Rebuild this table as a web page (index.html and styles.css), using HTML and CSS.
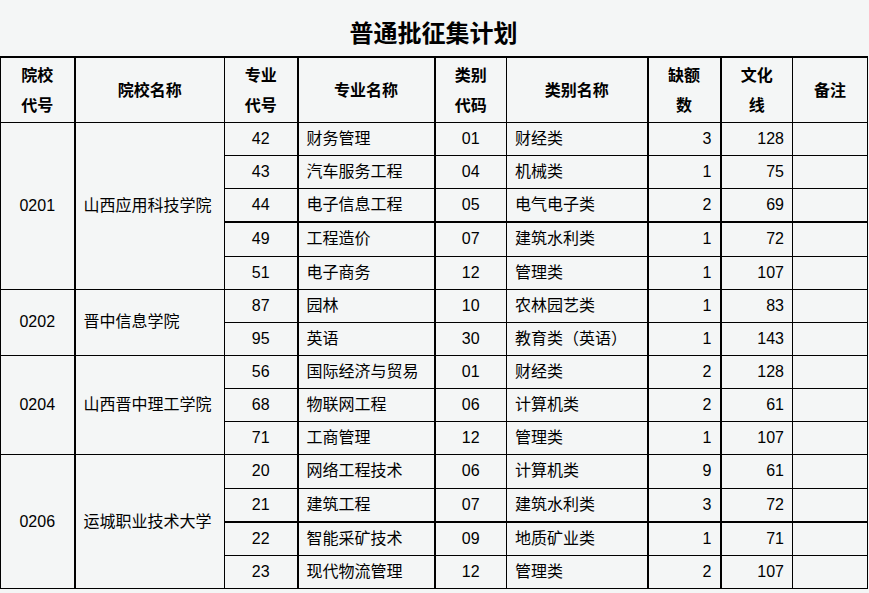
FILE: index.html
```html
<!DOCTYPE html>
<html lang="zh-CN">
<head>
<meta charset="utf-8">
<title>普通批征集计划</title>
<link rel="stylesheet" href="styles.css">
</head>
<body>
<div class="page">
  <h1 class="title">普通批征集计划</h1>
  <table class="plan">
    <colgroup>
      <col class="w1"><col class="w2"><col class="w3"><col class="w4"><col class="w5"><col class="w6"><col class="w7"><col class="w8"><col class="w9">
    </colgroup>
    <thead>
      <tr>
        <th class="tr">院校<br>代号</th>
        <th>院校名称</th>
        <th class="tr">专业<br>代号</th>
        <th class="tr">专业名称</th>
        <th>类别<br>代码</th>
        <th class="tr">类别名称</th>
        <th class="tr">缺额<br>数</th>
        <th>文化<br>线</th>
        <th>备注</th>
      </tr>
    </thead>
    <tbody>
      <tr>
        <td class="ctr tr" rowspan="5">0201</td>
        <td class="lft" rowspan="5">山西应用科技学院</td>
        <td class="ctr tr">42</td><td class="lft tr">财务管理</td><td class="ctr">01</td><td class="lft tr">财经类</td><td class="rgt tr">3</td><td class="rgt">128</td><td></td>
      </tr>
      <tr><td class="ctr tr">43</td><td class="lft tr">汽车服务工程</td><td class="ctr">04</td><td class="lft tr">机械类</td><td class="rgt tr">1</td><td class="rgt">75</td><td></td></tr>
      <tr><td class="ctr tr">44</td><td class="lft tr">电子信息工程</td><td class="ctr">05</td><td class="lft tr">电气电子类</td><td class="rgt tr">2</td><td class="rgt">69</td><td></td></tr>
      <tr class="tt"><td class="ctr tr">49</td><td class="lft tr">工程造价</td><td class="ctr">07</td><td class="lft tr">建筑水利类</td><td class="rgt tr">1</td><td class="rgt">72</td><td></td></tr>
      <tr><td class="ctr tr">51</td><td class="lft tr">电子商务</td><td class="ctr">12</td><td class="lft tr">管理类</td><td class="rgt tr">1</td><td class="rgt">107</td><td></td></tr>

      <tr>
        <td class="ctr tr" rowspan="2">0202</td>
        <td class="lft" rowspan="2">晋中信息学院</td>
        <td class="ctr tr">87</td><td class="lft tr">园林</td><td class="ctr">10</td><td class="lft tr">农林园艺类</td><td class="rgt tr">1</td><td class="rgt">83</td><td></td>
      </tr>
      <tr><td class="ctr tr">95</td><td class="lft tr">英语</td><td class="ctr">30</td><td class="lft tr">教育类（英语）</td><td class="rgt tr">1</td><td class="rgt">143</td><td></td></tr>

      <tr>
        <td class="ctr tr" rowspan="3">0204</td>
        <td class="lft" rowspan="3">山西晋中理工学院</td>
        <td class="ctr tr">56</td><td class="lft tr">国际经济与贸易</td><td class="ctr">01</td><td class="lft tr">财经类</td><td class="rgt tr">2</td><td class="rgt">128</td><td></td>
      </tr>
      <tr><td class="ctr tr">68</td><td class="lft tr">物联网工程</td><td class="ctr">06</td><td class="lft tr">计算机类</td><td class="rgt tr">2</td><td class="rgt">61</td><td></td></tr>
      <tr><td class="ctr tr">71</td><td class="lft tr">工商管理</td><td class="ctr">12</td><td class="lft tr">管理类</td><td class="rgt tr">1</td><td class="rgt">107</td><td></td></tr>

      <tr>
        <td class="ctr tr" rowspan="4">0206</td>
        <td class="lft" rowspan="4">运城职业技术大学</td>
        <td class="ctr tr">20</td><td class="lft tr">网络工程技术</td><td class="ctr">06</td><td class="lft tr">计算机类</td><td class="rgt tr">9</td><td class="rgt">61</td><td></td>
      </tr>
      <tr><td class="ctr tr">21</td><td class="lft tr">建筑工程</td><td class="ctr">07</td><td class="lft tr">建筑水利类</td><td class="rgt tr">3</td><td class="rgt">72</td><td></td></tr>
      <tr class="tt"><td class="ctr tr">22</td><td class="lft tr">智能采矿技术</td><td class="ctr">09</td><td class="lft tr">地质矿业类</td><td class="rgt tr">1</td><td class="rgt">71</td><td></td></tr>
      <tr><td class="ctr tr">23</td><td class="lft tr">现代物流管理</td><td class="ctr">12</td><td class="lft tr">管理类</td><td class="rgt tr">2</td><td class="rgt">107</td><td></td></tr>
    </tbody>
  </table>
</div>
</body>
</html>
```
FILE: styles.css
```css
html, body {
  margin: 0;
  padding: 0;
  background: #f4f6f6;
}
.page {
  width: 867px;
  font-family: "Liberation Sans", "Noto Sans CJK SC", sans-serif;
  color: #000;
}
.title {
  margin: 0;
  height: 56px;
  display: flex;
  align-items: center;
  justify-content: center;
  font-family: "Noto Sans CJK SC", sans-serif;
  font-size: 24px;
  font-weight: 700;
  padding-top: 6px;
  box-sizing: border-box;
}
.plan {
  width: 867px;
  border-collapse: collapse;
  table-layout: fixed;
  font-size: 16px;
  border-top: 2px solid #000;
}
.w1 { width: 74px; }
.w2 { width: 150px; }
.w3 { width: 73px; }
.w4 { width: 137px; }
.w5 { width: 72px; }
.w6 { width: 141px; }
.w7 { width: 73px; }
.w8 { width: 72px; }
.w9 { width: 75px; }
.plan th, .plan td {
  border: 1px solid #000;
  padding: 0;
}
.plan th {
  height: 61px;
  font-family: "Noto Sans CJK SC", sans-serif;
  font-size: 16px;
  font-weight: 700;
  line-height: 30px;
  text-align: center;
  padding-bottom: 3px;
}
.plan td {
  height: 32.15px;
  line-height: 20px;
}
.plan .tr { border-right: 2px solid #000; }
.plan .tt td { border-top: 2px solid #000; }
.ctr { text-align: center; }
.lft { text-align: left; padding-left: 8px !important; }
.rgt { text-align: right; padding-right: 8px !important; }
```
